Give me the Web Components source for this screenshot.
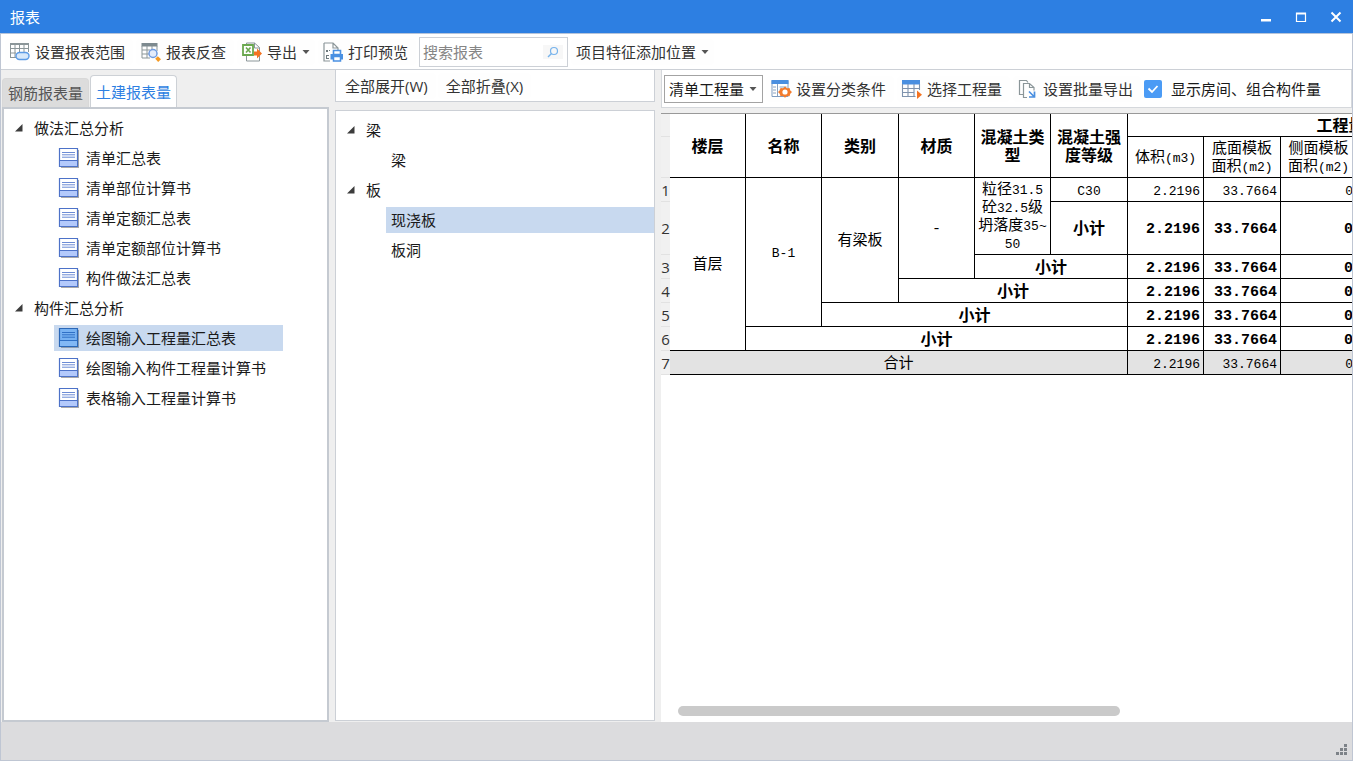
<!DOCTYPE html>
<html lang="zh-CN">
<head>
<meta charset="utf-8">
<title>报表</title>
<style>
  html, body { margin: 0; height: 100%; }
  body {
    font: 15px/20px "Open Sans", "Noto Sans CJK SC", sans-serif;
    color: #1a1a1a;
    background: #efefef;
    overflow: hidden;
  }
</style>
</head>
<body>
<report-window></report-window>

<script>
const define = (name, css, html, setup) => {
  const template = document.createElement('template');
  template.innerHTML = `<style>*{box-sizing:border-box}${css}</style>${html}`;
  customElements.define(name, class extends HTMLElement {
    constructor() {
      super();
      this.attachShadow({ mode: 'open' }).append(template.content.cloneNode(true));
    }
    connectedCallback() { if (setup) setup(this, this.shadowRoot); }
  });
};

const ICONS = {
  range: `<path d="M.5 1.500h18v15H.500z" fill="#fff"/><path d="M0 2h19" stroke="#8b9699" stroke-width="2"/><path d="M.5 2v14M5 2v14M9.500 2v8M14 2v8M18.500 2v8M0 6.500h19M0 11h6M0 15.500h6" stroke="#8b9699" fill="none"/><rect x="6" y="10.500" width="13" height="7" rx="3.500" fill="#d6e8fb" stroke="#5b9be6" stroke-width="1.400"/>`,
  lookup: `<path d="M.5 1h16v3.500H.500z" fill="#7d8a8f"/><path d="M1 4v12h8M6 4v12M11 4v3M16 4v5M1 8h8M1 12h7" stroke="#8b9699" fill="none"/><circle cx="12" cy="11.500" r="4" fill="#e4ecfb" stroke="#6f9be0" stroke-width="1.500"/><path d="m14.200 16.800 2.600-2.600 3.200 3-2.800 2.800z" fill="#f59a23"/>`,
  export: `<path d="M4.500 1h8l5 4.500V19h-13z" fill="#fff" stroke="#8b9699"/><path d="M12.500 1v5h5" fill="none" stroke="#8b9699"/><path d="M1 3h10v10H1z" fill="#fff" stroke="#6aa84f" stroke-width="1.800"/><path d="m4 5.500 4.500 5m0-5-4.500 5" stroke="#6aa84f" stroke-width="1.600"/><path d="M12 9.500h3V6.500l5 5-5 5v-3h-3z" fill="#f37321"/>`,
  print: `<path d="M1 1h9l5 5v4M10 1v5h5M1 1v18h6" fill="none" stroke="#8b9699" stroke-width="1.200"/><path d="M3 8h2v2H3zM3 13h3v1H4v2h2v1H3zM6 8h1v1H6z" fill="#6d797d"/><path d="M10.500 8.500h7v4h-7z" fill="#fff" stroke="#4a90e2" stroke-width="1.600"/><path d="M7.500 12h12.500v5.500H7.500z" fill="#4a90e2"/><path d="M10.500 14.500h7V19h-7z" fill="#fff" stroke="#4a90e2" stroke-width="1.500"/>`,
  classify: `<path d="M1 1.500h16v16H1z" fill="#fff" stroke="#7f9cc0"/><path d="M.5 1h17v4H.500z" fill="#4a8fe0"/><path d="M6.500 5v12M2 8h3M2 11h3M2 14h3M8.500 8h7M8.500 11h3" stroke="#8aa2bf"/><path d="m14 7.500 2 1.800 2.500-.4.800 2.500 1.700 1.600-1.700 1.800-.8 2.400-2.500-.3-2 1.800-2-1.800-2.500.3-.8-2.400L7 13l1.700-1.600.8-2.500 2.500.4z" fill="#f37b2c"/><circle cx="14" cy="13" r="2.600" fill="#fff"/>`,
  choose: `<path d="M0 1h18v4.500H0z" fill="#4a8fe0"/><path d="M.5 5v12.500h13M6 5v12.500M12 5v12.500M17.500 5v6M.5 9.500h17M.5 13.500h12" fill="none" stroke="#7f93ad" stroke-width="1.100"/><path d="M15 11.500l5 4.200-5 4.300z" fill="#f37321"/>`,
  batch: `<path d="M5 15.500H1.500v-14h7l1.500 2" fill="none" stroke="#8b9699" stroke-width="1.200"/><path d="M9 18.500H5.500v-14h6l4.500 4v3M11.500 4.500v4H16" fill="none" stroke="#8b9699" stroke-width="1.200"/><path d="m11 12.500 5 5M16.500 12.500v5.500H11" fill="none" stroke="#4a8fe0" stroke-width="1.700"/>`,
  sheet: `<path d="M2 2h18v18H2z" fill="#a9a9a9"/><path d="M.5.5h18v18H.500z" fill="#fff" stroke="#4d72c8" stroke-width="1.200"/><path d="M1 13h17v5H1z" fill="#b3c9fb"/><path d="M1 12.500h17" stroke="#4d72c8"/><path d="M3 4.500h13M3 6.800h13M3 9.200h13" stroke="#6b8bd4"/>`,
  'sheet-on': `<path d="M2 2h18v18H2z" fill="#8c9cb0"/><path d="M.5.5h18v18H.500z" fill="#78b2f2" stroke="#2a67b8" stroke-width="1.200"/><path d="M1 13h17v5H1z" fill="#82b8f5"/><path d="M1 12.500h17M3 4.500h13M3 6.800h13M3 9.200h13" stroke="#2f70c6"/>`
};

define('ui-icon', `
  :host { display: block; flex: none; width: 20px; height: 20px; }
  svg { display: block; overflow: visible; }`,
  `<svg width="20" height="20" viewBox="0 0 20 20" fill="none" aria-hidden="true"></svg>`,
  (host, root) => { root.querySelector('svg').innerHTML = ICONS[host.getAttribute('name')]; });

define('ui-caret', `
  :host { display: block; flex: none; width: 8px; height: 4px; }
  svg { display: block; }`,
  `<svg width="8" height="4" viewBox="0 0 8 4" aria-hidden="true"><path d="M.5 0h7L4 4z" fill="#555"/></svg>`);

define('tool-button', `
  :host { display: block; flex: none; }
  button {
    display: flex; align-items: center; gap: 5px; height: 26px; padding: 0 8px 0 5px;
    border: 0; border-radius: 4px; background: #fefefe; color: #333; font: inherit; white-space: nowrap;
  }
  :host([menu]) button { padding-right: 5px; }
  :host([plain]) button { padding: 0 8px; }`,
  `<button type="button"><slot name="icon"></slot><slot></slot><slot name="caret"></slot></button>`);

define('title-bar', `
  :host { display: flex; align-items: center; justify-content: space-between; height: 34px; padding-left: 10px;
    background: #2d7fe2; border-bottom: 1px solid #b5c4da; color: #fff; }
  h1 { margin: 0; font: inherit; }
  nav { display: flex; }
  button { display: grid; place-items: center; width: 35px; height: 33px; padding: 0; border: 0; background: none; }
  svg { display: block; }`,
  `<h1><slot></slot></h1>
  <nav>
    <button type="button" aria-label="最小化"><svg width="12" height="12"><path d="M1 8h10v2.500H1z" fill="#fff"/></svg></button>
    <button type="button" aria-label="最大化"><svg width="12" height="12"><path d="M1.500 2h9v8.500h-9zM1.500 3h9" fill="none" stroke="#fff" stroke-width="1.200"/></svg></button>
    <button type="button" aria-label="关闭"><svg width="12" height="12"><path d="m1.500 1.500 9 9m0-9-9 9" stroke="#fff" stroke-width="2"/></svg></button>
  </nav>`);

define('search-box', `
  :host { display: flex; align-items: center; flex: none; width: 149px; height: 30px; padding: 0 4px 0 3px;
    border: 1px solid #ccd0d6; background: #fff; }
  input { flex: 1; min-width: 0; padding: 0; border: 0; outline: 0; background: none; font: inherit; color: #333; }
  input::placeholder { color: #858585; opacity: 1; }
  button { display: grid; place-items: center; width: 20px; height: 14px; padding: 0; border: 0; background: #f7f7f7; }
  svg { display: block; }`,
  `<input type="search" placeholder="搜索报表" aria-label="搜索报表">
  <button type="button" aria-label="搜索"><svg width="12" height="12" fill="none"><circle cx="7" cy="5" r="3.500" stroke="#77b3ec" stroke-width="1.200"/><path d="m4.500 7.500-3.500 3.500" stroke="#77b3ec" stroke-width="1.500"/></svg></button>`);

define('drop-down', `
  :host { display: grid; grid-template-columns: 1fr 8px; align-items: center; flex: none; width: 99px; height: 28px;
    padding-right: 5px; border: 1px solid #a3a3a3; background: #fff; }
  select { grid-area: 1 / 1 / 2 / 3; height: 26px; padding: 0 0 0 4px; border: 0; outline: 0; appearance: none;
    background: none; color: #1a1a1a; font: inherit; }
  ui-caret { grid-area: 1 / 2; pointer-events: none; }`,
  `<select aria-label="工程量类型"><option>清单工程量</option></select><ui-caret></ui-caret>`);

define('check-field', `
  :host { display: block; flex: none; }
  label { display: flex; align-items: center; gap: 9px; white-space: nowrap; }
  input { width: 18px; height: 18px; margin: 0; border-radius: 2px; appearance: none; background: #4b9bf5
    url("data:image/svg+xml,%3Csvg xmlns='http://www.w3.org/2000/svg' width='18' height='18'%3E%3Cpath d='m4.500 8.500 3.500 3.500 5.500-6' fill='none' stroke='white' stroke-width='1.800'/%3E%3C/svg%3E"); }`,
  `<label><input type="checkbox" checked><span><slot></slot></span></label>`);

define('tree-group', `
  :host { display: block; }
  .head { display: flex; align-items: center; height: 30px; gap: 11px; padding-left: 11px; }
  .leaves { display: flex; flex-direction: column; }
  svg { display: block; flex: none; }`,
  `<div class="head"><svg width="8" height="8" aria-hidden="true"><path d="M7.500 0v7.500H0z" fill="#3c3c3c"/></svg><slot name="label"></slot></div>
  <div class="leaves" role="group"><slot></slot></div>`);

define('tree-leaf', `
  :host { display: flex; align-items: center; gap: 7px; height: 26px; margin: 2px 0 2px 50px; padding-left: 5px; white-space: nowrap; }
  :host([selected]) { background: #c8d9ef; }`,
  `<slot name="icon"></slot><slot></slot>`);

define('report-tabs', `
  :host { display: flex; align-items: flex-end; gap: 1px; height: 37px; }
  button { width: 87px; height: 29px; padding: 0; border: 1px solid #d8d8d8; border-bottom: 0; border-radius: 4px 4px 0 0;
    background: #dcdcdc; color: #555; font: inherit; }
  button[aria-selected=true] { height: 32px; border-color: #cdd1d6; background: #fff; color: #2d7fe2; }`,
  `<button type="button" role="tab" aria-selected="false">钢筋报表量</button>
  <button type="button" role="tab" aria-selected="true">土建报表量</button>`);

define('quantity-table', `
  :host { display: block; flex: 1; min-height: 0; overflow: hidden; color: #000; }
  table { table-layout: fixed; width: 924px; border-collapse: separate; border-spacing: 0; border-top: 1px solid #999;
    font-family: "Liberation Mono", "Noto Sans CJK SC", monospace; line-height: 18px; }
  .rule { width: 9px; }
  col { width: 76px; }
  .wide { width: 77px; }
  .rest { width: 229px; }
  th, td { padding: 4px 0 0; border: 0 solid #000; border-width: 0 1px 1px 0; text-align: center; font-weight: 400; }
  thead th { font-size: 16px; font-weight: 700; }
  thead .sub { font-size: 15px; font-weight: 400; }
  .n { font-size: 13px; }
  th.no, thead th.no { padding: 0; border-right: 0; border-color: #e2e2e2; background: #f1f1f1; color: #333;
    font: 15px/18px "Open Sans", sans-serif; }
  .q { padding-right: 3px; text-align: right; font-size: 13px; }
  .sum .q { font-size: 15px; font-weight: 700; }
  .b { font-size: 16px; font-weight: 700; }
  .total td { background: #e3e3e3; }
  .h1 { height: 23px; } .h2 { height: 41px; } .h { height: 24px; } .h3 { height: 53px; }`,
  `<table>
    <colgroup><col class="rule"><col><col><col class="wide"><col><col><col class="wide"><col><col class="wide"><col><col class="rest"></colgroup>
    <thead>
      <tr class="h1"><th class="no"></th><th rowspan="2">楼层</th><th rowspan="2">名称</th><th rowspan="2">类别</th><th rowspan="2">材质</th><th rowspan="2">混凝土类<br>型</th><th rowspan="2">混凝土强<br>度等级</th><th colspan="4">工程量名称</th></tr>
      <tr class="h2"><th class="no"></th><th class="sub">体积<span class="n">(m3)</span></th><th class="sub">底面模板<br>面积<span class="n">(m2)</span></th><th class="sub">侧面模板<br>面积<span class="n">(m2)</span></th><th class="sub"></th></tr>
    </thead>
    <tbody>
      <tr class="h"><th class="no">1</th><td rowspan="6">首层</td><td rowspan="5"><span class="n">B-1</span></td><td rowspan="4">有梁板</td><td rowspan="3">-</td><td rowspan="2">粒径<span class="n">31.5</span><br>砼<span class="n">32.5</span>级<br>坍落度<span class="n">35~</span><br><span class="n">50</span></td><td><span class="n">C30</span></td><td class="q">2.2196</td><td class="q">33.7664</td><td class="q">0</td><td></td></tr>
      <tr class="h3 sum"><th class="no">2</th><td class="b">小计</td><td class="q">2.2196</td><td class="q">33.7664</td><td class="q">0</td><td></td></tr>
      <tr class="h sum"><th class="no">3</th><td class="b" colspan="2">小计</td><td class="q">2.2196</td><td class="q">33.7664</td><td class="q">0</td><td></td></tr>
      <tr class="h sum"><th class="no">4</th><td class="b" colspan="3">小计</td><td class="q">2.2196</td><td class="q">33.7664</td><td class="q">0</td><td></td></tr>
      <tr class="h sum"><th class="no">5</th><td class="b" colspan="4">小计</td><td class="q">2.2196</td><td class="q">33.7664</td><td class="q">0</td><td></td></tr>
      <tr class="h sum"><th class="no">6</th><td class="b" colspan="5">小计</td><td class="q">2.2196</td><td class="q">33.7664</td><td class="q">0</td><td></td></tr>
      <tr class="h total"><th class="no">7</th><td colspan="6">合计</td><td class="q">2.2196</td><td class="q">33.7664</td><td class="q">0</td><td></td></tr>
    </tbody>
  </table>`);

define('scroll-thumb', `
  :host { display: block; flex: none; width: 64%; height: 10px; margin: 0 0 6px 17px; border-radius: 5px; background: #cacaca; }`, ``);

define('status-bar', `
  :host { display: flex; justify-content: flex-end; align-items: flex-end; height: 38px; padding: 0 3px 3px 0; background: #dcdcde; }
  svg { display: block; }`,
  `<svg width="14" height="14" fill="#7d8288" aria-hidden="true"><path d="M9 1h3v3H9zM5 5h3v3H5zM9 5h3v3H9zM1 9h3v3H1zM5 9h3v3H5zM9 9h3v3H9z"/></svg>`);

const leaf = (text, on) => `<tree-leaf role="treeitem"${on ? ' selected' : ''}><ui-icon slot="icon" name="sheet${on ? '-on' : ''}"></ui-icon>${text}</tree-leaf>`;
const tool = (icon, text) => `<tool-button><ui-icon slot="icon" name="${icon}"></ui-icon>${text}</tool-button>`;

define('report-window', `
  :host { display: flex; flex-direction: column; height: 100vh; min-height: 480px; }
  .frame { display: flex; flex-direction: column; flex: 1; min-height: 0; border: 1px solid #bfc6d3; border-top: 0; }
  .bar { display: flex; align-items: center; background: #fff; }
  .main-bar { gap: 3px; height: 36px; padding-left: 4px; border-bottom: 1px solid #ccd0d6; }
  main { display: grid; grid-template-columns: 327px 320px minmax(0, 1fr); gap: 6px; flex: 1; min-height: 0; padding-left: 1px; }
  section { display: flex; flex-direction: column; min-width: 0; min-height: 0; }
  .panel { flex: 1; min-height: 0; padding-top: 4px; background: #fff; border: 1px solid #ccd0d6; }
  .reports { padding-right: 44px; border: 2px solid #c5cad1; }
  .fold-bar { gap: 2px; height: 32px; margin-bottom: 8px; padding-left: 1px; border: 1px solid #ccd0d6; border-top: 0; }
  .parts { margin-bottom: 1px; }
  .view-bar { gap: 3px; height: 38px; margin-bottom: 5px; padding-left: 2px; border: 1px solid #d5d8dc; border-top: 0; }
  .view { display: flex; flex-direction: column; flex: 1; min-height: 0; background: #fff; }`,
  `<title-bar>报表</title-bar>
  <div class="frame">
    <div class="bar main-bar" role="toolbar">
      ${tool('range', '设置报表范围')}
      ${tool('lookup', '报表反查')}
      <tool-button menu><ui-icon slot="icon" name="export"></ui-icon>导出<ui-caret slot="caret"></ui-caret></tool-button>
      ${tool('print', '打印预览')}
      <search-box></search-box>
      <tool-button menu>项目特征添加位置<ui-caret slot="caret"></ui-caret></tool-button>
    </div>
    <main>
      <section>
        <report-tabs role="tablist"></report-tabs>
        <div class="panel reports" role="tree">
          <tree-group><span slot="label">做法汇总分析</span>
            ${leaf('清单汇总表')}${leaf('清单部位计算书')}${leaf('清单定额汇总表')}${leaf('清单定额部位计算书')}${leaf('构件做法汇总表')}
          </tree-group>
          <tree-group><span slot="label">构件汇总分析</span>
            ${leaf('绘图输入工程量汇总表', true)}${leaf('绘图输入构件工程量计算书')}${leaf('表格输入工程量计算书')}
          </tree-group>
        </div>
      </section>
      <section>
        <div class="bar fold-bar" role="toolbar">
          <tool-button plain>全部展开(W)</tool-button>
          <tool-button plain>全部折叠(X)</tool-button>
        </div>
        <div class="panel parts" role="tree">
          <tree-group><span slot="label">梁</span><tree-leaf role="treeitem">梁</tree-leaf></tree-group>
          <tree-group><span slot="label">板</span><tree-leaf role="treeitem" selected>现浇板</tree-leaf><tree-leaf role="treeitem">板洞</tree-leaf></tree-group>
        </div>
      </section>
      <section>
        <div class="bar view-bar" role="toolbar">
          <drop-down></drop-down>
          ${tool('classify', '设置分类条件')}
          ${tool('choose', '选择工程量')}
          ${tool('batch', '设置批量导出')}
          <check-field>显示房间、组合构件量</check-field>
        </div>
        <div class="view">
          <quantity-table></quantity-table>
          <scroll-thumb></scroll-thumb>
        </div>
      </section>
    </main>
    <status-bar></status-bar>
  </div>`);
</script>
</body>
</html>
